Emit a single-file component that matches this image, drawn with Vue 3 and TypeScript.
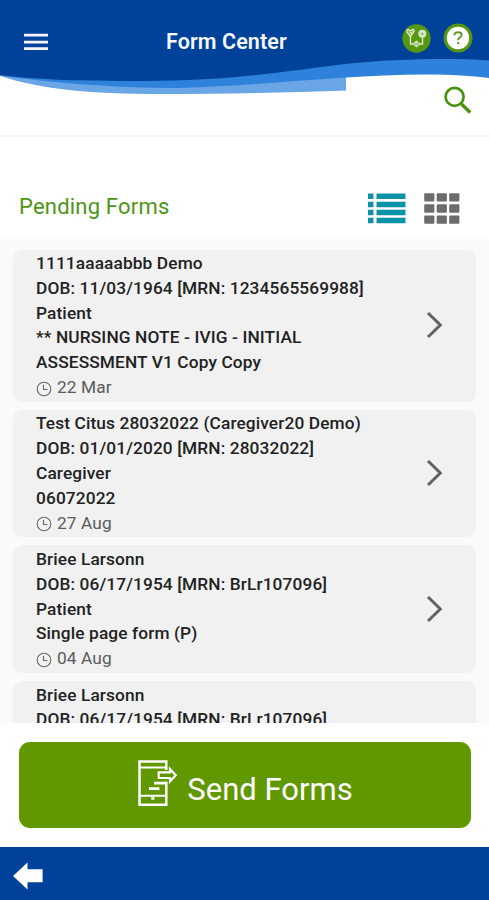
<script setup lang="ts">
interface PendingForm {
  id: number
  patient: string
  details: string
  role: string
  title: string
  date: string
}

const forms: PendingForm[] = [
  {
    id: 1,
    patient: '1111aaaaabbb Demo',
    details: 'DOB: 11/03/1964 [MRN: 1234565569988]',
    role: 'Patient',
    title: '** NURSING NOTE - IVIG - INITIAL ASSESSMENT V1 Copy Copy',
    date: '22 Mar',
  },
  {
    id: 2,
    patient: 'Test Citus 28032022 (Caregiver20 Demo)',
    details: 'DOB: 01/01/2020 [MRN: 28032022]',
    role: 'Caregiver',
    title: '06072022',
    date: '27 Aug',
  },
  {
    id: 3,
    patient: 'Briee Larsonn',
    details: 'DOB: 06/17/1954 [MRN: BrLr107096]',
    role: 'Patient',
    title: 'Single page form (P)',
    date: '04 Aug',
  },
  {
    id: 4,
    patient: 'Briee Larsonn',
    details: 'DOB: 06/17/1954 [MRN: BrLr107096]',
    role: 'Patient',
    title: 'Single page form (P)',
    date: '04 Aug',
  },
]
</script>

<template>
  <div class="screen">
    <header class="header">
      <svg class="waves" viewBox="0 0 489 100" aria-hidden="true">
        <path d="M0 76 C40 89 90 94 160 94 C230 94 290 92.5 346 90.5 V70 H0Z" fill="#6aa5e6" />
        <path d="M0 75.5 C45 82 110 88 180 88 C270 85 350 74.5 425 74.5 C452 74.5 472 76 489 78 V50 H0Z" fill="#2f82dc" />
        <path d="M0 0 H489 V60.5 C450 58 400 58.5 345 64 C280 72 230 81 140 81 C80 81 40 80 0 75Z" fill="#004299" />
      </svg>
      <div class="bar">
        <button class="icon-button" aria-label="Menu">
          <svg width="24" height="18" viewBox="0 0 24 18">
            <path d="M0 2.2H24M0 9.1H24M0 15.6H24" stroke="#f6f4ff" stroke-width="2.8" />
          </svg>
        </button>
        <h1 class="title">Form Center</h1>
        <div class="actions">
          <button class="icon-button" aria-label="Workflow">
            <svg width="29" height="29" viewBox="0 0 29 29">
              <circle cx="14.5" cy="14.5" r="14.2" fill="#559711" />
              <g fill="none" stroke="#dcebcc" stroke-width="1.4">
                <path d="M8.5 12.5V20H20.5V12.5" />
                <path d="M5 6.5Q5 5 6.5 5.5L8.5 7L11 5.4Q12.5 6 11.7 8L8.5 12.5L5 8Z" />
                <path d="M6.5 7.5L10 10M10.5 7.5L7.5 10" stroke-width="1" />
              </g>
              <circle cx="20.3" cy="9.8" r="4" fill="#d5e7c4" />
              <path d="M18.5 9.8H22M20.3 8.3V11.3" stroke="#85b456" stroke-width=".8" />
              <path d="M10 20L14.5 16.2L19 20L14.5 23.5Z" fill="#c9dfb1" />
              <path d="M12 20H17" stroke="#88b65c" />
            </svg>
          </button>
          <button class="icon-button" aria-label="Help">
            <svg width="30" height="30" viewBox="0 0 30 30">
              <circle cx="15" cy="15" r="14.5" fill="#559711" />
              <circle cx="15" cy="15" r="11.2" fill="#fff" />
              <path d="M11.4 12.2Q11.4 9.3 15 9.3Q18.7 9.3 18.7 11.8Q18.7 13.3 16.9 14.4Q15.1 15.4 15.1 17.3" fill="none" stroke="#68962e" stroke-width="1.9" />
              <circle cx="15.1" cy="20.1" r="1.2" fill="#68962e" />
            </svg>
          </button>
        </div>
      </div>
      <div class="search-row">
        <button class="icon-button" aria-label="Search">
          <svg width="28" height="28" viewBox="0 0 28 28" fill="none" stroke="#48930e">
            <circle cx="10.6" cy="10.8" r="9" stroke-width="2.7" />
            <path d="M17.5 18L26.2 26.5" stroke-width="3.3" />
          </svg>
        </button>
      </div>
    </header>

    <section class="heading">
      <h2>Pending Forms</h2>
      <div class="views">
        <button class="icon-button" aria-label="List view">
          <svg width="38" height="31" viewBox="0 0 38 31" fill="#0d91a8">
            <path d="M0 .5H5.5V6H0ZM8.5 .5H37.5V6H8.5ZM0 8.7H5.5V14.2H0ZM8.5 8.7H37.5V14.2H8.5ZM0 16.7H5.5V22.2H0ZM8.5 16.7H37.5V22.2H8.5ZM0 24.7H5.5V30.2H0ZM8.5 24.7H37.5V30.2H8.5Z" />
          </svg>
        </button>
        <button class="icon-button" aria-label="Grid view">
          <svg width="36" height="31" viewBox="0 0 36 31" fill="#6c6c6c">
            <template v-for="row in 3" :key="row">
              <rect v-for="col in 3" :key="col" :x="(col - 1) * 12.5 + 0.2" :y="(row - 1) * 11.1 + 0.2" width="10.2" height="8.4" rx="1" />
            </template>
          </svg>
        </button>
      </div>
    </section>

    <main class="list">
      <article v-for="form in forms" :key="form.id" class="card">
        <div class="info">
          <p>{{ form.patient }}</p>
          <p>{{ form.details }}</p>
          <p>{{ form.role }}</p>
          <p>{{ form.title }}</p>
          <p class="date">
            <svg width="16" height="16" viewBox="0 0 16 16" fill="none" stroke="#666" stroke-width="1.1">
              <circle cx="8" cy="8" r="6.8" />
              <path d="M7.5 3.7V8.5H11.3" />
            </svg>
            <span>{{ form.date }}</span>
          </p>
        </div>
        <svg class="chevron" width="18" height="28" viewBox="0 0 18 28" fill="none" stroke="#626262" stroke-width="3">
          <path d="M2 2L14.3 14L2 26" />
        </svg>
      </article>
    </main>

    <div class="send-area">
      <button class="send">
        <svg width="40" height="46" viewBox="0 0 40 46" fill="none" stroke="#fff" stroke-width="2.5">
          <path d="M28.3 10V1.5H1.5V44.7H28.3V21.5" />
          <path d="M2 7.5H28M2 35.7H28" stroke-width="2" />
          <path d="M14.8 37V39.8" stroke-width="3" />
          <path d="M20.7 12.4H32V9L37.7 15.3L32 21.5V18H20.7Z" stroke-width="2.2" />
          <path d="M16 23.2H27M11 28.6H21.5" stroke-width="2.7" />
        </svg>
        <span>Send Forms</span>
      </button>
    </div>

    <footer class="footer">
      <button class="icon-button" aria-label="Back">
        <svg width="30" height="28" viewBox="0 0 30 28">
          <path d="M0 14L14.5 .5V7.3H29.6V20.3H14.5V27.5Z" fill="#fff" />
        </svg>
      </button>
    </footer>
  </div>
</template>

<style>
body {
  margin: 0;
}
</style>

<style scoped>
.screen {
  width: 489px;
  height: 900px;
  display: flex;
  flex-direction: column;
  overflow: hidden;
  background: #fff;
  font-family: Roboto, "Liberation Sans", sans-serif;
}

.icon-button {
  display: flex;
  padding: 0;
  border: 0;
  background: none;
}

.header {
  position: relative;
  flex: none;
  height: 135px;
  border-bottom: 2px solid #f3f3f3;
}

.waves {
  position: absolute;
  top: 0;
  left: 0;
  width: 489px;
  height: 100px;
}

.bar {
  position: relative;
  display: grid;
  grid-template-columns: 142px 1fr auto;
  align-items: center;
  height: 84px;
  padding: 0 16px 0 24px;
}

.title {
  margin: 0;
  color: #f6f8ff;
  font-size: 21.5px;
  font-weight: 600;
  line-height: 26px;
  letter-spacing: 0.1px;
}

.actions {
  display: flex;
  align-items: center;
  gap: 12px;
  padding-bottom: 8px;
}

.search-row {
  position: relative;
  display: flex;
  justify-content: flex-end;
  padding: 2px 17px 0;
}

.heading {
  flex: none;
  display: flex;
  align-items: center;
  justify-content: space-between;
  box-sizing: border-box;
  height: 105px;
  padding: 34px 29px 0 19px;
  background: linear-gradient(#fff 92%, #fafafa);
}

.heading h2 {
  margin: 0;
  color: #4d9514;
  font-size: 22px;
  font-weight: 400;
  letter-spacing: 0.2px;
}

.views {
  display: flex;
  gap: 18px;
  padding-top: 3px;
}

.list {
  flex: none;
  display: flex;
  flex-direction: column;
  gap: 8px;
  box-sizing: border-box;
  height: 481px;
  padding: 7.5px 13px 0;
  overflow: hidden;
  background: #fafafa;
}

.card {
  flex: none;
  display: flex;
  align-items: center;
  justify-content: space-between;
  padding: 1.5px 32px 2.1px 23px;
  border-radius: 9px;
  background: #f1f1f1;
}

.info {
  width: 345px;
}

.info p {
  margin: 0;
  color: #222;
  font-size: 17.3px;
  font-weight: 500;
  line-height: 24.8px;
  letter-spacing: 0.12px;
}

.info .date {
  display: flex;
  align-items: center;
  gap: 5px;
  color: #5b5b5b;
  font-weight: 400;
}

.date svg {
  margin-top: 3px;
}

.send-area {
  flex: none;
  box-sizing: border-box;
  height: 124px;
  padding: 19px 18px 0 19px;
}

.send {
  display: flex;
  align-items: center;
  justify-content: center;
  gap: 9px;
  width: 452px;
  height: 86px;
  padding: 0 0 4px 1px;
  border: 0;
  border-radius: 11px;
  background: #619800;
  color: #fff;
  font-family: inherit;
  font-size: 31px;
  letter-spacing: 0;
}

.send span {
  padding-top: 13px;
}

.footer {
  flex: 1;
  display: flex;
  align-items: center;
  padding: 5px 13px 0;
  background: #004299;
}
</style>
